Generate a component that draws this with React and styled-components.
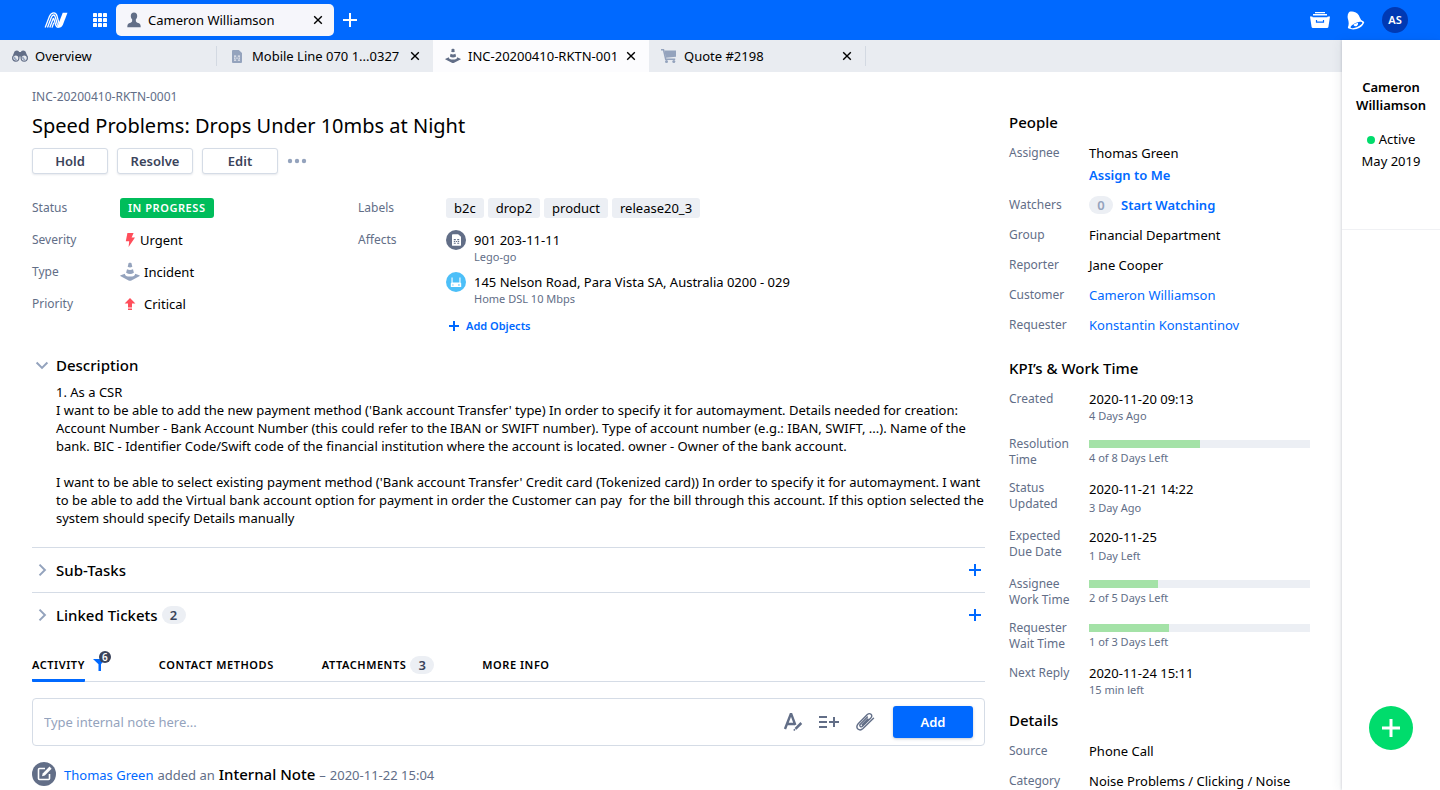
import React from "react";
import styled, { createGlobalStyle, css } from "styled-components";

const c = {
  blue: "#0069ff",
  text: "#000000",
  muted: "#626e87",
  soft: "#94a3bd",
  dark: "#3a435a",
  line: "#d5dce6",
  pill: "#eceff4",
  bar: "#e9ecf1",
  red: "#ff4e5b",
};

const GlobalStyle = createGlobalStyle`
  *, *::before, *::after { box-sizing: border-box; }
  body {
    margin: 0;
    background: #fff;
    color: ${c.text};
    font: 400 13px/18px "Noto Sans", sans-serif;
  }
  button, input { font: inherit; color: inherit; margin: 0; }
  button { padding: 0; border: 0; background: none; cursor: pointer; }
  a { color: ${c.blue}; text-decoration: none; }
  h1, h2, p, dl, dd, dt { margin: 0; padding: 0; font-size: inherit; font-weight: inherit; }
  svg { display: block; flex: none; }
`;

/* ---------- icons ---------- */

const Logo = () => (
  <svg width="24" height="16" viewBox="0 0 24 16" fill="none" stroke="#fff" strokeWidth="1.3">
    <path d="M1.2 15.6 5.4 4.4Q7 .9 9.8.9 12.2.9 13 4L15 11.4Q15.8 14 17.4 12.8" />
    <path d="M3.5 15.6 7.3 5.6Q8.3 3 9.6 3 10.8 3 11.3 5l2 7.2Q14.2 15 16.4 14.6" />
    <path d="M5.8 15.6 8.9 7.2Q9.4 5.6 9.9 7l1.8 6Q12.6 15.4 14.6 15.4" />
    <path d="M8 15.6 9.8 10.6" />
    <path d="M18.7.8h4.8L18.8 13Q17.6 16 14.4 15.8L13.6 14.2Z" fill="#fff" stroke="none" />
  </svg>
);

const GridIcon = () => (
  <svg width="14" height="14" viewBox="0 0 14 14" fill="#fff">
    {[0, 5, 10].map((y) => [0, 5, 10].map((x) => <rect key={`${x}-${y}`} x={x} y={y} width="4" height="4" rx=".4" />))}
  </svg>
);

const PersonIcon = () => (
  <svg width="14" height="16" viewBox="0 0 14 16" fill="#626e87">
    <path d="M7 .6c2.1 0 3.2 1.4 3.2 3.4 0 1.5-.6 2.7-1.4 3.5l.1 1.8c.2.8 1 1.2 2.4 1.8 1.700.7 2.400 1.500 2.400 4.200H.3c0-2.700.7-3.500 2.400-4.200 1.400-.6 2.200-1 2.400-1.800l.1-1.800C4.400 6.700 3.800 5.500 3.800 4 3.800 2 4.900.6 7 .6Z" />
  </svg>
);

const CloseIcon = () => (
  <svg width="10" height="10" viewBox="0 0 10 10" stroke="#000" strokeWidth="1.4" fill="none">
    <path d="m1.2 1.2 7.6 7.6M8.8 1.2 1.2 8.8" />
  </svg>
);

const PlusIcon = ({ size = 12, color = c.blue, weight = 2 }) => (
  <svg width={size} height={size} viewBox={`0 0 ${size} ${size}`} stroke={color} strokeWidth={weight}>
    <path d={`M${size / 2} 0V${size}M0 ${size / 2}H${size}`} />
  </svg>
);

const BinocularsIcon = () => (
  <svg width="16" height="12" viewBox="0 0 16 12">
    <path d="M2.5 1.6Q4.5-.2 6.6 1l.4 1h2l.4-1q2.1-1.200 4.100.6L15.500 6.500q.6 1.500 0 3l-6.300.5-.6-3.400H7.400L6.800 10 .5 9.500q-.6-1.500 0-3Z" fill="#626e87" />
    <circle cx="3.8" cy="8" r="3.1" fill="#e9ecf1" stroke="#626e87" strokeWidth="1.1" />
    <circle cx="12.2" cy="8" r="3.1" fill="#e9ecf1" stroke="#626e87" strokeWidth="1.1" />
    <path d="M2.6 6.700a2.200 2.200 0 0 0 2.200 2.800M11 6.700a2.200 2.200 0 0 0 2.200 2.800" stroke="#94a3bd" strokeWidth="1.6" fill="none" />
  </svg>
);

const SimIcon = ({ color = c.soft, chip = c.bar, width = 10, height = 13 }) => (
  <svg width={width} height={height} viewBox="0 0 10 13">
    <path d="M1 0h5.8L10 3v9q0 1-1 1H1q-1 0-1-1V1Q0 0 1 0Z" fill={color} />
    <path d="M2 5.500h2.200v1.200H2zM5.800 5.500H8v1.200H5.800zM2 7.500h1.500v1.200H2zM4.300 7.500h1.400v1.200H4.300zM6.500 7.500H8v1.200H6.500zM2 9.500h2.200v1.200H2zM5.800 9.500H8v1.200H5.800z" fill={chip} />
  </svg>
);

const ConeIcon = ({ size = 20, color = c.soft }) => (
  <svg width={size} height={size} viewBox="0 0 20 20" fill={color}>
    <path d="M8.500 1.500Q8.700.8 9.300.8h1.400q.6 0 .8.7l.8 3.300Q10 6 7.700 4.800Z" />
    <path d="M7 7.300q3 1.500 6 0l.9 3.400q-3.900 2.400-7.800 0Z" />
    <path d="M4.900 11.700.7 13.300q-1 .5 0 1l7.900 4.100q1.400.7 2.800 0l7.900-4.100q1-.5 0-1l-4.200-1.600q.2 2.700-5.100 2.800-5.300-.1-5.100-2.800Z" />
  </svg>
);

const CartIcon = () => (
  <svg width="16" height="16" viewBox="0 0 16 16">
    <path d="M0 1.800h2.500l2.200 9.400h9.500" fill="none" stroke={c.soft} strokeWidth="1.5" />
    <path d="M3.300 2.500H15v6.200L4.800 9.800Z" fill={c.soft} />
    <circle cx="5.5" cy="13.6" r="1.5" fill={c.soft} />
    <circle cx="12.8" cy="13.6" r="1.5" fill={c.soft} />
  </svg>
);

const ArchiveIcon = () => (
  <svg width="20" height="16" viewBox="0 0 20 16" fill="#fff">
    <path d="M5 0h10v1.200H5zM3 2h14v1.400H3z" />
    <path d="M0 4.600h2.200l.6.700h14.400l.6-.7H20l-1.600 10.300q-.2 1.100-1.300 1.100H2.900q-1.100 0-1.300-1.100Z" />
    <path d="M6.500 8v2.200h7V8" fill="none" stroke={c.blue} strokeWidth="1.2" />
  </svg>
);

const BellIcon = () => (
  <svg width="18" height="19" viewBox="0 0 18 19" fill="#fff">
    <path d="M1.800 1.600Q2.600.3 4 .6 5 .2 6.600.700 11.500 2 12.800 6.500q.7 2.700 3.800 4 .9.500.4 1.600-1.800 4.400-7.500 5.900-4.200 1-7.900-.4-1-.5-.6-1.600Q2.400 12.500 1 8.300-.1 4 1.800 1.600Z" />
    <ellipse cx="9.4" cy="14" rx="6.4" ry="2.1" transform="rotate(-24 9.4 14)" fill={c.blue} />
    <path d="M6.300 13.700q2.700-1.900 4.700-1.600.6 1.700-1.100 2.800-2 1.100-3.600-1.200Z" />
  </svg>
);

const BoltIcon = () => (
  <svg width="20" height="16" viewBox="0 0 20 16" fill={c.red}>
    <path d="M7.400 1h6.200l-2 4.600H15L8.600 15l.6-5.800H5.800Z" />
  </svg>
);

const CriticalIcon = () => (
  <svg width="20" height="16" viewBox="0 0 20 16" fill={c.red}>
    <path d="m10 2 5.400 5.400H12v4.200H8V7.400H4.600ZM8 12.500h4V14H8z" />
  </svg>
);

const RouterIcon = () => (
  <svg width="12" height="12" viewBox="0 0 12 12" fill="#fff">
    <path d="M1.500 1.500h1.100v5h6.800v-5h1.100v5l.7.800V11H.8V7.300l.7-.8ZM2.300 8.500v1.100h1.200V8.500Zm5.700 0v1.100h1.800V8.500Z" fillRule="evenodd" />
  </svg>
);

const ChevronIcon = ({ open }) => (
  <svg width="20" height="20" viewBox="0 0 20 20" fill="none" stroke={c.soft} strokeWidth="2">
    <path d={open ? "m4.600 7.500 5.400 5.400 5.400-5.400" : "m7.500 4.600 5.400 5.400-5.400 5.400"} />
  </svg>
);

const FilterIcon = () => (
  <svg width="12" height="13" viewBox="0 0 12 13" fill={c.blue}>
    <path d="M0 1h12L8 6.200V13H5.500V6.200Z" />
  </svg>
);

const FormatIcon = () => (
  <svg width="20" height="20" viewBox="0 0 20 20" fill="none" stroke={c.muted}>
    <path d="M2 17 7.700 2.200h.6L12.300 13M4.200 12h7" strokeWidth="2.4" />
    <path d="m18.300 11-5.800 5.800" strokeWidth="2.5" />
    <path d="m12 17.200-1.200 1.300" strokeWidth="1.6" />
  </svg>
);

const ListPlusIcon = () => (
  <svg width="20" height="14" viewBox="0 0 20 14" stroke={c.muted} strokeWidth="2">
    <path d="M0 2h8M0 7h8M0 12h8M15 2v10M10 7h10" />
  </svg>
);

const ClipIcon = () => (
  <svg width="20" height="20" viewBox="0 0 20 20" fill="none" stroke={c.muted} strokeWidth="1.4" strokeLinecap="round">
    <path d="m12.400 5-7.100 7.200q-1.100 1.200 0 2.200 1.100 1 2.200-.1l8.300-8.400q1.800-2 .2-3.600-1.700-1.500-3.700.3L3.200 11.800q-2.500 2.800-.3 5.200 2.400 2.100 5.100-.4L18.500 6.300M7.200 12.700l5.600-5.600" />
  </svg>
);

const NoteIcon = () => (
  <svg width="24" height="24" viewBox="0 0 24 24" fill="none">
    <circle cx="12" cy="12" r="12" fill={c.muted} />
    <path d="M13 6.500H7.500q-1 0-1 1v9q0 1 1 1h9q1 0 1-1V12" stroke="#fff" strokeWidth="1.6" />
    <path d="m10 14.200.7-2.800 6.800-6.800 2.100 2.100-6.800 6.800Z" fill="#fff" />
  </svg>
);

const DotsIcon = () => (
  <svg width="20" height="6" viewBox="0 0 20 6" fill={c.soft}>
    <circle cx="3" cy="3" r="2.200" />
    <circle cx="10" cy="3" r="2.200" />
    <circle cx="17" cy="3" r="2.200" />
  </svg>
);

/* ---------- shell ---------- */

const Shell = styled.div`
  min-height: 100vh;
  display: flex;
  flex-direction: column;
`;

const TopBar = styled.header`
  height: 40px;
  padding: 0 32px 0 44px;
  display: flex;
  align-items: center;
  background: ${c.blue};
`;

const IconButton = styled.button`
  display: flex;
  align-items: center;
  justify-content: center;
  min-width: 20px;
  height: 20px;
`;

const LogoLink = styled.a`
  width: 46px;
`;

const ClientTab = styled.div`
  width: 218px;
  height: 32px;
  margin: 0 6px;
  padding: 0 11px;
  display: flex;
  align-items: center;
  gap: 7px;
  border-radius: 5px;
  background: #f6f6fb;
  & > span { flex: 1; }
`;

const TopActions = styled.div`
  margin-left: auto;
  display: flex;
  align-items: center;
  gap: 16px;
`;

const Avatar = styled.button`
  width: 26px;
  height: 26px;
  border-radius: 50%;
  background: #0039b3;
  color: #fff;
  font-size: 11px;
  font-weight: 600;
`;

const Body = styled.div`
  flex: 1;
  display: grid;
  grid-template-columns: minmax(0, 1fr) 98px;
`;

const TabStrip = styled.nav`
  height: 32px;
  display: flex;
  align-items: center;
  background: ${c.bar};
`;

const Tab = styled.div`
  width: 216px;
  height: 100%;
  padding: 0 13px 0 12px;
  display: flex;
  align-items: center;
  gap: 7px;
  background: ${(p) => (p.$active ? "#fcfcfe" : "transparent")};
  & > button:first-of-type { flex: 1; min-width: 0; text-align: left; white-space: nowrap; }
`;

const TabGlyph = styled.span`
  width: 16px;
  display: flex;
  justify-content: center;
`;

const TabDivider = styled.span`
  width: 1px;
  height: 20px;
  background: #d3d9e2;
`;

const Close = styled(IconButton)`
  min-width: 10px;
`;

const Content = styled.main`
  padding: 16px 32px 0;
  display: grid;
  grid-template-columns: minmax(0, 1fr) 301px;
  column-gap: 24px;
`;

/* ---------- ticket ---------- */

const TicketId = styled.p`
  font-size: 12px;
  line-height: 18px;
  color: ${c.muted};
`;

const Title = styled.h1`
  margin: 6px 0 8px;
  font-size: 20px;
  line-height: 28px;
`;

const Actions = styled.div`
  display: flex;
  align-items: center;
  gap: 9px;
`;

const ActionButton = styled.button`
  width: 76px;
  height: 26px;
  border: 1px solid ${c.line};
  border-radius: 3px;
  background: #fff;
  box-shadow: 0 1px 2px rgba(60, 75, 110, 0.12);
  color: ${c.dark};
  font-weight: 600;
`;

const Fields = styled.div`
  margin: 24px 0 21px;
  display: grid;
  grid-template-columns: 326px minmax(0, 1fr);
`;

const FieldList = styled.dl`
  display: flex;
  flex-direction: column;
  gap: 12px;
`;

const Field = styled.div`
  display: grid;
  grid-template-columns: 88px minmax(0, 1fr);
  line-height: 20px;
  dt { font-size: 12px; color: ${c.muted}; }
  dd { display: flex; align-items: center; gap: ${(p) => p.$gap || 0}px; }
`;

const capsText = css`
  font-size: 11px;
  font-weight: 600;
  letter-spacing: 0.05em;
`;

const Status = styled.span`
  ${capsText}
  padding: 0 8px;
  border-radius: 3px;
  background: #00bd5b;
  color: #fff;
`;

const Tag = styled.span`
  padding: 0 8px;
  border-radius: 3px;
  background: ${c.pill};
`;

const ObjectList = styled.div`
  display: flex;
  flex-direction: column;
  align-items: flex-start;
  gap: 8px;
`;

const ObjectItem = styled.div`
  display: flex;
  gap: 8px;
  small { display: block; font-size: 11px; line-height: 14px; color: ${c.muted}; }
`;

const ObjectIcon = styled.span`
  width: 20px;
  height: 20px;
  border-radius: 50%;
  display: flex;
  align-items: center;
  justify-content: center;
  background: ${(p) => p.$color};
`;

const AddObjects = styled.button`
  margin: 4px 0 0 3px;
  display: flex;
  align-items: center;
  gap: 7px;
  color: ${c.blue};
  font-size: 11px;
  line-height: 16px;
  font-weight: 600;
`;

const headingText = css`
  font-size: 15px;
  line-height: 20px;
  font-weight: 500;
`;

const Toggle = styled.button`
  ${headingText}
  display: flex;
  align-items: center;
  gap: 4px;
`;

const Description = styled.p`
  padding: 8px 0 20px 24px;
  white-space: pre-line;
`;

const Collapsed = styled.section`
  border-top: 1px solid ${c.line};
  height: 45px;
  display: flex;
  align-items: center;
  gap: 4px;
  & > button:last-child { margin-left: auto; }
`;

const Count = styled.span`
  width: 24px;
  height: 18px;
  border-radius: 9px;
  background: ${c.pill};
  color: ${(p) => (p.$faint ? c.soft : c.dark)};
  font-size: 13px;
  line-height: 18px;
  font-weight: 600;
  text-align: center;
`;

const ActivityTabs = styled.div`
  margin: 10px 0 16px;
  height: 35px;
  display: flex;
  gap: 48px;
  border-bottom: 1px solid ${c.line};
`;

const ActivityTab = styled.div`
  display: flex;
  align-items: center;
  gap: 4px;
  height: 35px;
  & > button:first-child {
    ${capsText}
    height: 35px;
    border-bottom: 3px solid ${(p) => (p.$active ? c.blue : "transparent")};
    padding-top: 3px;
    border-radius: 1px;
  }
`;

const FilterButton = styled(IconButton)`
  position: relative;
  margin-left: 4px;
  width: 18px;
  min-width: 18px;
  justify-content: flex-start;
  span {
    position: absolute;
    top: -4px;
    right: 0;
    width: 12px;
    height: 12px;
    border-radius: 50%;
    background: ${c.dark};
    color: #fff;
    font-size: 10px;
    line-height: 12px;
    font-weight: 600;
  }
`;

const Composer = styled.form`
  height: 48px;
  padding: 0 11px;
  display: flex;
  align-items: center;
  gap: 16px;
  border: 1px solid ${c.line};
  border-radius: 4px;
  input {
    flex: 1;
    min-width: 0;
    border: 0;
    padding: 0;
    outline: 0;
    background: none;
  }
  input::placeholder { color: ${c.soft}; opacity: 1; }
`;

const Submit = styled.button`
  width: 80px;
  height: 32px;
  margin-left: 2px;
  border-radius: 3px;
  background: ${c.blue};
  box-shadow: 0 1px 3px rgba(60, 75, 110, 0.3);
  color: #fff;
  font-weight: 600;
`;

const Entry = styled.article`
  padding-top: 16px;
  display: flex;
  align-items: center;
  gap: 8px;
  color: ${c.muted};
  p { display: flex; align-items: baseline; gap: 4px; }
  strong { color: ${c.text}; font-size: 15px; font-weight: 500; }
`;

/* ---------- facts column ---------- */

const Facts = styled.aside`
  padding-top: 24px;
`;

const FactSection = styled.section`
  margin-top: ${(p) => p.$gap || 0}px;
  h2 { ${headingText} margin-bottom: 12px; }
  dl { display: flex; flex-direction: column; gap: 12px; }
`;

const Fact = styled.div`
  display: grid;
  grid-template-columns: 80px minmax(0, 1fr);
  dt {
    font-size: 12px;
    line-height: ${(p) => (p.$tall ? 16 : 18)}px;
    color: ${c.muted};
    white-space: pre-line;
  }
  dd small {
    display: block;
    margin-top: ${(p) => (p.$tall ? 2 : 0)}px;
    font-size: 11px;
    line-height: 16px;
    color: ${c.muted};
  }
`;

const Strong = styled.button`
  color: ${c.blue};
  font-weight: 600;
`;

const Stack = styled.dd`
  display: flex;
  flex-direction: column;
  align-items: flex-start;
  gap: 4px;
`;

const Inline = styled.dd`
  display: flex;
  gap: 8px;
`;

const Track = styled.div`
  height: 8px;
  margin-top: 4px;
  background: ${c.pill};
  & > div { height: 8px; background: #a4e2a7; }
`;

const Progress = ({ value, label }) => (
  <Track role="progressbar" aria-label={label} aria-valuenow={value} aria-valuemin={0} aria-valuemax={100}>
    <div style={{ width: `${value}%` }} />
  </Track>
);

/* ---------- client panel ---------- */

const ClientPanel = styled.aside`
  display: flex;
  flex-direction: column;
  align-items: center;
  background: #fff;
  box-shadow: -1px 0 2px rgba(40, 50, 80, 0.14), -3px 0 10px rgba(40, 50, 80, 0.05);
  text-align: center;
`;

const ClientCard = styled.div`
  align-self: stretch;
  height: 190px;
  padding-top: 38px;
  border-bottom: 1px solid #f0f1f4;
  h2 { margin-bottom: 14px; font-weight: 600; }
  p { line-height: 22px; }
`;

const Dot = styled.i`
  display: inline-block;
  width: 8px;
  height: 8px;
  margin-right: 4px;
  border-radius: 50%;
  background: #00dc6c;
`;

const Fab = styled.button`
  width: 44px;
  height: 44px;
  margin: auto 0 40px;
  display: flex;
  align-items: center;
  justify-content: center;
  border-radius: 50%;
  background: #00dc6c;
`;

const tabs = [
  { label: "Overview", icon: <BinocularsIcon />, divider: true },
  { label: "Mobile Line 070 1...0327", icon: <SimIcon />, closable: true },
  { label: "INC-20200410-RKTN-001", icon: <ConeIcon size={16} color={c.muted} />, closable: true, active: true },
  { label: "Quote #2198", icon: <CartIcon />, closable: true, divider: true },
];

const kpis = [
  { label: "Created", value: "2020-11-20 09:13", note: "4 Days Ago" },
  { label: "Resolution\nTime", progress: 50, note: "4 of 8 Days Left" },
  { label: "Status\nUpdated", value: "2020-11-21 14:22", note: "3 Day Ago" },
  { label: "Expected\nDue Date", value: "2020-11-25", note: "1 Day Left" },
  { label: "Assignee\nWork Time", progress: 31, note: "2 of 5 Days Left" },
  { label: "Requester\nWait Time", progress: 36, note: "1 of 3 Days Left" },
  { label: "Next Reply", value: "2020-11-24 15:11", note: "15 min left" },
];

const description = `1. As a CSR
I want to be able to add the new payment method ('Bank account Transfer' type) In order to specify it for automayment. Details needed for creation: Account Number - Bank Account Number (this could refer to the IBAN or SWIFT number). Type of account number (e.g.: IBAN, SWIFT, ...). Name of the bank. BIC - Identifier Code/Swift code of the financial institution where the account is located. owner - Owner of the bank account.

I want to be able to select existing payment method ('Bank account Transfer' Credit card (Tokenized card)) In order to specify it for automayment. I want to be able to add the Virtual bank account option for payment in order the Customer can pay \u00a0for the bill through this account. If this option selected the system should specify Details manually`;

export default function App() {
  return (
    <Shell>
      <GlobalStyle />
      <TopBar>
        <LogoLink href="#" aria-label="Home"><Logo /></LogoLink>
        <IconButton aria-label="Apps"><GridIcon /></IconButton>
        <ClientTab>
          <PersonIcon />
          <span>Cameron Williamson</span>
          <Close aria-label="Close client"><CloseIcon /></Close>
        </ClientTab>
        <IconButton aria-label="New tab"><PlusIcon size={14} color="#fff" /></IconButton>
        <TopActions>
          <IconButton aria-label="Archive"><ArchiveIcon /></IconButton>
          <IconButton aria-label="Notifications"><BellIcon /></IconButton>
          <Avatar>AS</Avatar>
        </TopActions>
      </TopBar>

      <Body>
        <div>
          <TabStrip>
            {tabs.map((t) => (
              <React.Fragment key={t.label}>
                <Tab $active={t.active}>
                  <TabGlyph>{t.icon}</TabGlyph>
                  <button>{t.label}</button>
                  {t.closable && <Close aria-label={`Close ${t.label}`}><CloseIcon /></Close>}
                </Tab>
                {t.divider && <TabDivider />}
              </React.Fragment>
            ))}
          </TabStrip>

          <Content>
            <div>
              <TicketId>INC-20200410-RKTN-0001</TicketId>
              <Title>Speed Problems: Drops Under 10mbs at Night</Title>
              <Actions>
                <ActionButton>Hold</ActionButton>
                <ActionButton>Resolve</ActionButton>
                <ActionButton>Edit</ActionButton>
                <IconButton aria-label="More actions"><DotsIcon /></IconButton>
              </Actions>

              <Fields>
                <FieldList>
                  <Field><dt>Status</dt><dd><Status>IN PROGRESS</Status></dd></Field>
                  <Field><dt>Severity</dt><dd><BoltIcon />Urgent</dd></Field>
                  <Field $gap={4}><dt>Type</dt><dd><ConeIcon />Incident</dd></Field>
                  <Field $gap={4}><dt>Priority</dt><dd><CriticalIcon />Critical</dd></Field>
                </FieldList>
                <FieldList>
                  <Field $gap={4}>
                    <dt>Labels</dt>
                    <dd>{["b2c", "drop2", "product", "release20_3"].map((t) => <Tag key={t}>{t}</Tag>)}</dd>
                  </Field>
                  <Field>
                    <dt>Affects</dt>
                    <dd>
                      <ObjectList>
                        <ObjectItem>
                          <ObjectIcon $color={c.muted}><SimIcon color="#fff" chip={c.muted} width={9} height={12} /></ObjectIcon>
                          <div>901 203-11-11<small>Lego-go</small></div>
                        </ObjectItem>
                        <ObjectItem>
                          <ObjectIcon $color="#4cbff8"><RouterIcon /></ObjectIcon>
                          <div>145 Nelson Road, Para Vista SA, Australia 0200 - 029<small>Home DSL 10 Mbps</small></div>
                        </ObjectItem>
                        <AddObjects><PlusIcon size={10} />Add Objects</AddObjects>
                      </ObjectList>
                    </dd>
                  </Field>
                </FieldList>
              </Fields>

              <Toggle aria-expanded="true"><ChevronIcon open />Description</Toggle>
              <Description>{description}</Description>

              <Collapsed>
                <Toggle aria-expanded="false"><ChevronIcon />Sub-Tasks</Toggle>
                <IconButton aria-label="Add sub-task"><PlusIcon /></IconButton>
              </Collapsed>
              <Collapsed>
                <Toggle aria-expanded="false"><ChevronIcon />Linked Tickets</Toggle>
                <Count>2</Count>
                <IconButton aria-label="Link ticket"><PlusIcon /></IconButton>
              </Collapsed>

              <ActivityTabs>
                <ActivityTab $active>
                  <button>ACTIVITY</button>
                  <FilterButton aria-label="Filters"><FilterIcon /><span>6</span></FilterButton>
                </ActivityTab>
                <ActivityTab><button>CONTACT METHODS</button></ActivityTab>
                <ActivityTab><button>ATTACHMENTS</button><Count>3</Count></ActivityTab>
                <ActivityTab><button>MORE INFO</button></ActivityTab>
              </ActivityTabs>

              <Composer onSubmit={(e) => e.preventDefault()}>
                <input aria-label="Internal note" placeholder="Type internal note here..." />
                <IconButton type="button" aria-label="Text format"><FormatIcon /></IconButton>
                <IconButton type="button" aria-label="Insert template"><ListPlusIcon /></IconButton>
                <IconButton type="button" aria-label="Attach file"><ClipIcon /></IconButton>
                <Submit type="submit">Add</Submit>
              </Composer>

              <Entry>
                <NoteIcon />
                <p>
                  <a href="#">Thomas Green</a>
                  <span>added an</span>
                  <strong>Internal Note</strong>
                  <span>–</span>
                  <time>2020-11-22 15:04</time>
                </p>
              </Entry>
            </div>

            <Facts>
              <FactSection>
                <h2>People</h2>
                <dl>
                  <Fact><dt>Assignee</dt><Stack>Thomas Green<Strong>Assign to Me</Strong></Stack></Fact>
                  <Fact><dt>Watchers</dt><Inline><Count $faint>0</Count><Strong>Start Watching</Strong></Inline></Fact>
                  <Fact><dt>Group</dt><dd>Financial Department</dd></Fact>
                  <Fact><dt>Reporter</dt><dd>Jane Cooper</dd></Fact>
                  <Fact><dt>Customer</dt><dd><a href="#">Cameron Williamson</a></dd></Fact>
                  <Fact><dt>Requester</dt><dd><a href="#">Konstantin Konstantinov</a></dd></Fact>
                </dl>
              </FactSection>

              <FactSection $gap={24}>
                <h2>KPI’s &amp; Work Time</h2>
                <dl>
                  {kpis.map((k) => (
                    <Fact key={k.label} $tall={k.label.includes("\n")}>
                      <dt>{k.label}</dt>
                      <dd>
                        {k.progress ? <Progress value={k.progress} label={k.label} /> : k.value}
                        <small>{k.note}</small>
                      </dd>
                    </Fact>
                  ))}
                </dl>
              </FactSection>

              <FactSection $gap={12}>
                <h2>Details</h2>
                <dl>
                  <Fact><dt>Source</dt><dd>Phone Call</dd></Fact>
                  <Fact><dt>Category</dt><dd>Noise Problems / Clicking / Noise</dd></Fact>
                </dl>
              </FactSection>
            </Facts>
          </Content>
        </div>

        <ClientPanel>
          <ClientCard>
            <h2>Cameron<br />Williamson</h2>
            <p><Dot />Active</p>
            <p>May 2019</p>
          </ClientCard>
          <Fab aria-label="Create"><PlusIcon size={18} color="#fff" weight={3} /></Fab>
        </ClientPanel>
      </Body>
    </Shell>
  );
}
